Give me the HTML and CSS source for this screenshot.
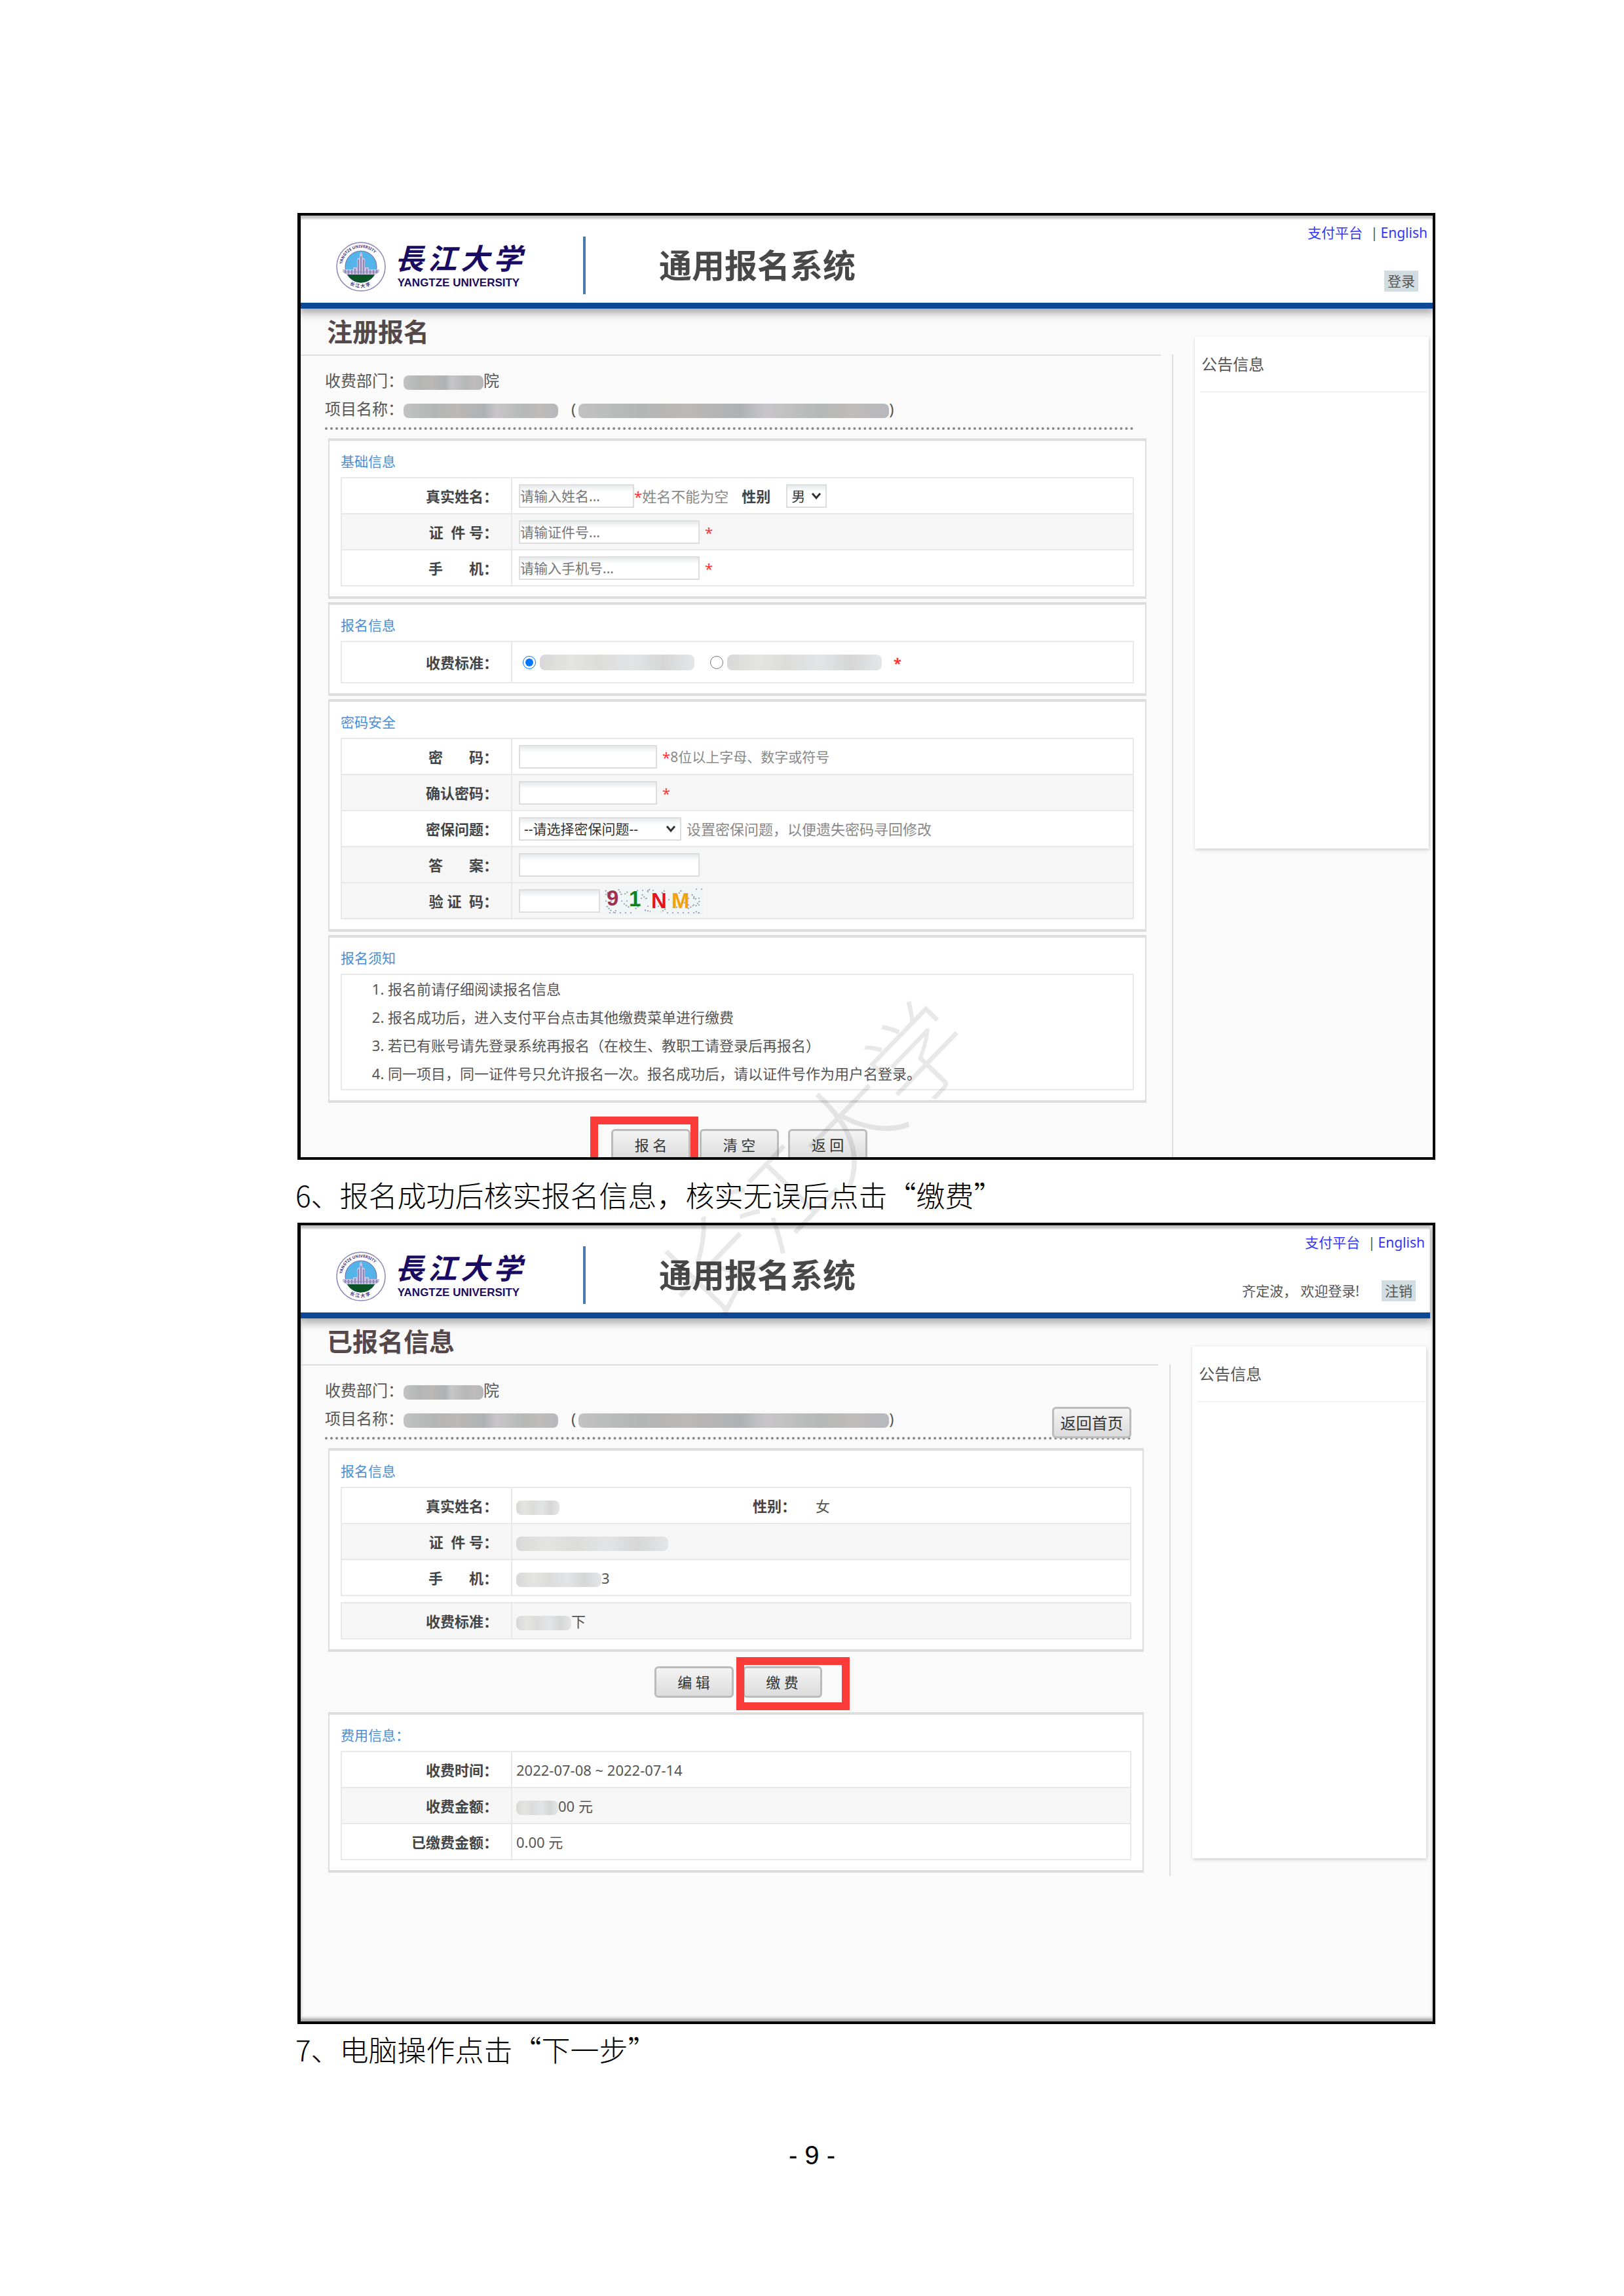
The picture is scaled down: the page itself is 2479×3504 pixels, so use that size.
FILE: index.html
```html
<!DOCTYPE html>
<html lang="zh-CN">
<head>
    <meta charset="UTF-8">
    <meta name="viewport" content="width=device-width, initial-scale=1.0">
    <title>通用报名系统 操作说明</title>
    <link rel="stylesheet" href="styles.css">
</head>
<body>
    <main class="page">
        <!-- 注册报名 -->
        <section class="screen">
            <header class="header">
                <!-- 校徽 -->
                <svg class="emblem" viewBox="0 0 76 76" aria-hidden="true">
                    <g id="emblem">
                        <circle cx="38" cy="38" r="37" fill="#fff" stroke="#8d84b8" stroke-width="1.5"/>
                        <path id="ring-top" d="M9 38a29 29 0 0 1 58 0" fill="none"/>
                        <path id="ring-bottom" d="M6 38a32 32 0 0 0 64 0" fill="none"/>
                        <text class="ring-text"><textPath href="#ring-top" startOffset="4">YANGTZE UNIVERSITY</textPath></text>
                        <text class="ring-text ring-text-cn"><textPath href="#ring-bottom" startOffset="32">长 江 大 学</textPath></text>
                        <circle cx="38" cy="38" r="24" fill="#54b4ea" stroke="#6b66a5"/>
                        <path d="M17 50h42a24 24 0 0 1-42 0z" fill="#0a5528"/>
                        <path d="M10 42h16v-3h6V26l4-2v-5l2-4 2 4v5l4 2v13h6v3h16v4l-6 4H16l-6-4z" fill="#c9c3e0"/>
                        <path d="M34 27v22M38 22v27M42 27v22M29 41v8M47 41v8M14 43v5M19 43v6M24 43v6M52 43v6M57 43v6M62 43v5" stroke="#7a74ad" stroke-width="1.5"/>
                        <path d="M12 46h52" stroke="#8d84b8"/>
                    </g>
                </svg>
                <div class="brand">
                    <div class="brand-cn"><span>長</span><span>江</span><span>大</span><span>学</span></div>
                    <div class="brand-en">YANGTZE UNIVERSITY</div>
                </div>
                <h1 class="title">通用报名系统</h1>
                <div class="header-side">
                    <nav class="links"><a href="#">支付平台</a><span class="bar">|</span><a href="#">English</a></nav>
                    <div class="user"><button type="button" class="login">登录</button></div>
                </div>
            </header>
            <div class="body">
                <form class="content">
                    <h2>注册报名</h2>
                    <div class="meta">
                        <p>收费部门：<span class="smear smear-dept"></span>院</p>
                        <p>项目名称：<span class="smear smear-name"></span><span class="paren">(</span><span class="smear smear-long"></span>)</p>
                    </div>
                    <section class="box">
                        <h3>基础信息</h3>
                        <table>
                            <tr>
                                <th><label for="name">真实姓名：</label></th>
                                <td><div class="field">
                                    <input id="name" class="w-name" type="text" placeholder="请输入姓名..."><span class="req">*</span><span class="tip">姓名不能为空</span>
                                    <label class="sex-label" for="sex">性别</label>
                                    <span class="select w-sex"><select id="sex"><option>男</option><option>女</option></select><svg viewBox="0 0 16 12"><path d="M2 2l6 7 6-7"/></svg></span>
                                </div></td>
                            </tr>
                            <tr class="even">
                                <th><label for="idno">证&nbsp; 件 号：</label></th>
                                <td><div class="field"><input id="idno" class="w-long" type="text" placeholder="请输证件号..."><span class="req gap">*</span></div></td>
                            </tr>
                            <tr>
                                <th><label for="phone">手<span class="pad"></span>机：</label></th>
                                <td><div class="field"><input id="phone" class="w-long" type="text" placeholder="请输入手机号..."><span class="req gap">*</span></div></td>
                            </tr>
                        </table>
                    </section>
                    <section class="box">
                        <h3>报名信息</h3>
                        <table>
                            <tr class="tall">
                                <th>收费标准：</th>
                                <td><div class="field fees">
                                    <span class="fee"><input id="fee1" type="radio" name="fee" checked><label for="fee1" class="smear light smear-fee" aria-label="收费标准一"></label></span>
                                    <span class="fee"><input id="fee2" type="radio" name="fee"><label for="fee2" class="smear light smear-fee" aria-label="收费标准二"></label></span>
                                    <span class="req fee-req">*</span>
                                </div></td>
                            </tr>
                        </table>
                    </section>
                    <section class="box">
                        <h3>密码安全</h3>
                        <table>
                            <tr>
                                <th><label for="pwd">密<span class="pad"></span>码：</label></th>
                                <td><div class="field"><input id="pwd" class="w-pwd" type="password"><span class="req gap">*</span><span class="tip small">8位以上字母、数字或符号</span></div></td>
                            </tr>
                            <tr class="even">
                                <th><label for="pwd2">确认密码：</label></th>
                                <td><div class="field"><input id="pwd2" class="w-pwd" type="password"><span class="req gap">*</span></div></td>
                            </tr>
                            <tr>
                                <th><label for="question">密保问题：</label></th>
                                <td><div class="field">
                                    <span class="select w-question"><select id="question"><option>--请选择密保问题--</option></select><svg viewBox="0 0 16 12"><path d="M2 2l6 7 6-7"/></svg></span>
                                    <span class="tip gap">设置密保问题，以便遗失密码寻回修改</span>
                                </div></td>
                            </tr>
                            <tr class="even">
                                <th><label for="answer">答<span class="pad"></span>案：</label></th>
                                <td><div class="field"><input id="answer" class="w-long" type="text"></div></td>
                            </tr>
                            <tr class="even">
                                <th><label for="code">验 证&nbsp; 码：</label></th>
                                <td><div class="field">
                                    <input id="code" class="w-code" type="text">
                                    <svg class="captcha" viewBox="0 0 152 44" role="img" aria-label="验证码">
                                        <rect width="152" height="44" fill="#f2f5f5"/>
                                        <path d="M4 30l8 8M22 4l5 9M30 26l9 6M36 8l-5 4M48 34l7-6M58 12l6 7M62 36l9 2M88 10l6-5M94 34l-7 5M106 24l6 9M118 6l-5 6M128 34l8-5M134 12l7 8M146 22l-7 9M122 24l5 5M2 6l6 6M14 40l6-5M70 4l-5 6M140 38l7 4" stroke="#8fa0a4" stroke-width="2" stroke-dasharray="2 2" fill="none"/>
                                        <path d="M2 12h22M8 40h40M50 6h30M66 30h22M96 40h50M120 18h28M140 4h10M2 22h40M56 18h14M90 20h14M128 28h20" stroke="#a6a8c8" stroke-width="2" stroke-dasharray="2 6" fill="none"/>
                                        <text x="4" y="29" fill="#9b3350">9</text>
                                        <text x="38" y="30" fill="#128021">1</text>
                                        <text x="72" y="33" fill="#e5141c">N</text>
                                        <text x="103" y="33" fill="#f2a20c">M</text>
                                    </svg>
                                </div></td>
                            </tr>
                        </table>
                    </section>
                    <section class="box">
                        <h3>报名须知</h3>
                        <ol class="notice">
                            <li>报名前请仔细阅读报名信息</li>
                            <li>报名成功后，进入支付平台点击其他缴费菜单进行缴费</li>
                            <li>若已有账号请先登录系统再报名（在校生、教职工请登录后再报名）</li>
                            <li>同一项目，同一证件号只允许报名一次。报名成功后，请以证件号作为用户名登录。</li>
                        </ol>
                    </section>
                    <div class="actions actions-cut">
                        <span class="mark mark-signup"><button type="button" class="btn">报 名</button></span>
                        <button type="reset" class="btn">清 空</button>
                        <button type="button" class="btn">返 回</button>
                    </div>
                </form>
                <div class="divider"></div>
                <aside class="news"><h4>公告信息</h4></aside>
            </div>
        </section>

        <p class="step">6、报名成功后核实报名信息，核实无误后点击“缴费”</p>

        <!-- 已报名信息 -->
        <section class="screen screen-done">
            <header class="header">
                <svg class="emblem" viewBox="0 0 76 76" aria-hidden="true"><use href="#emblem"/></svg>
                <div class="brand">
                    <div class="brand-cn"><span>長</span><span>江</span><span>大</span><span>学</span></div>
                    <div class="brand-en">YANGTZE UNIVERSITY</div>
                </div>
                <h1 class="title">通用报名系统</h1>
                <div class="header-side">
                    <nav class="links"><a href="#">支付平台</a><span class="bar">|</span><a href="#">English</a></nav>
                    <div class="user"><span>齐定波， 欢迎登录!</span><button type="button" class="login">注销</button></div>
                </div>
            </header>
            <div class="body">
                <div class="content">
                    <h2>已报名信息</h2>
                    <div class="meta">
                        <p>收费部门：<span class="smear smear-dept"></span>院</p>
                        <p>项目名称：<span class="smear smear-name"></span><span class="paren">(</span><span class="smear smear-long"></span>)</p>
                        <button type="button" class="btn btn-home">返回首页</button>
                    </div>
                    <section class="box">
                        <h3>报名信息</h3>
                        <table>
                            <tr>
                                <th>真实姓名：</th>
                                <td class="half"><span class="smear light smear-user"></span></td>
                                <td class="sex"><b>性别：</b>女</td>
                            </tr>
                            <tr class="even">
                                <th>证&nbsp; 件 号：</th>
                                <td colspan="2"><span class="smear light smear-id"></span></td>
                            </tr>
                            <tr>
                                <th>手<span class="pad"></span>机：</th>
                                <td colspan="2"><span class="smear light smear-phone"></span>3</td>
                            </tr>
                        </table>
                        <table class="second">
                            <tr class="even">
                                <th>收费标准：</th>
                                <td><span class="smear light smear-std"></span>下</td>
                            </tr>
                        </table>
                    </section>
                    <div class="actions">
                        <button type="button" class="btn">编 辑</button>
                        <span class="mark mark-pay"><button type="button" class="btn">缴 费</button></span>
                    </div>
                    <section class="box">
                        <h3>费用信息：</h3>
                        <table>
                            <tr>
                                <th>收费时间：</th>
                                <td>2022-07-08 ~ 2022-07-14</td>
                            </tr>
                            <tr class="even">
                                <th>收费金额：</th>
                                <td><span class="smear light smear-sum"></span>00 元</td>
                            </tr>
                            <tr>
                                <th>已缴费金额：</th>
                                <td>0.00 元</td>
                            </tr>
                        </table>
                    </section>
                </div>
                <div class="divider"></div>
                <aside class="news"><h4>公告信息</h4></aside>
            </div>
        </section>

        <p class="step step-last">7、电脑操作点击“下一步”</p>
        <div class="watermark" aria-hidden="true">长江大学</div>
    </main>
    <footer class="page-no">- 9 -</footer>
</body>
</html>
```
FILE: styles.css
```css
* {
    margin: 0;
    padding: 0;
    box-sizing: border-box;
}

body {
    background-color: #ffffff;
    color: #555555;
    font-family: "Noto Sans", "Noto Sans CJK SC", sans-serif;
    font-size: 22px;
    line-height: 32px;
}

button, input, select {
    font: inherit;
    color: inherit;
}

.ring-text {
    font-size: 6px;
    font-weight: bold;
    fill: #3d3180;
}

.ring-text-cn {
    font-size: 7px;
}

.page {
    position: relative;
    padding: 325px 288px 0 454px;
}

/* 截图外框 */
.screen {
    border: 4px solid #000000;
    border-left-width: 5px;
    background-color: #fafafa;
    overflow: hidden;
}

.screen-done {
    padding: 0 4px 222px 0;
    box-shadow: inset 0 -5px 4px #aaaaaa;
}

.header {
    display: flex;
    align-items: center;
    height: 142px;
    padding-left: 54px;
    background-color: #ffffff;
    border-bottom: 9px solid #0d4896;
    box-shadow: inset 0 5px 3px #c4c4c4, 0 4px 12px 3px #aaaaaa;
}

.emblem {
    width: 76px;
    height: 76px;
    margin-top: 22px;
}

.brand {
    width: 194px;
    margin: 12px 93px 0 14px;
    color: #1a0b62;
}

.brand-cn {
    display: flex;
    justify-content: space-between;
    font-size: 44px;
    font-weight: bold;
    font-style: italic;
    line-height: 60px;
}

.brand-en {
    font-family: "Liberation Sans", sans-serif;
    font-size: 17px;
    font-weight: bold;
    line-height: 16px;
    text-align: center;
}

.title {
    margin-top: 18px;
    padding: 9px 0 9px 112px;
    border-left: 4px solid #4a7aac;
    color: #484848;
    font-size: 50px;
    line-height: 70px;
}

.header-side {
    display: flex;
    flex-direction: column;
    align-items: flex-end;
    gap: 42px;
    margin: -8px 0 0 auto;
    padding-right: 8px;
    font-size: 21px;
}

.links a {
    color: #3333ff;
    text-decoration: none;
}

.links .bar {
    margin: 0 4px 0 12px;
}

.user {
    display: flex;
    gap: 34px;
    padding-right: 14px;
}

.login {
    padding: 0 5px;
    border: 0;
    background-color: #d2dde2;
}

.body {
    display: flex;
}

.content {
    flex: 1;
    min-width: 0;
}

h2 {
    padding: 12px 40px;
    border-bottom: 2px solid #dddddd;
    color: #54484a;
    font-size: 39px;
    line-height: 46px;
}

.meta {
    position: relative;
    margin: 0 41px 13px 37px;
    padding: 16px 0 7px;
    border-bottom: 4px dotted #888888;
    font-size: 24px;
    line-height: 43px;
}

.btn-home {
    position: absolute;
    right: 0;
    bottom: -2px;
}

.paren {
    margin: 0 4px 0 20px;
}

/* 打码块 */
.smear {
    display: inline-block;
    height: 22px;
    border-radius: 8px;
    vertical-align: middle;
    background: linear-gradient(90deg, #c2c2c2, #b4b6b6 20%, #bcb8b6 35%, #aeb1b4 52%, #c8c6c8 60%, #b6b8b8 78%, #c0bcba 88%, #b6b8bc);
}

.smear.light {
    background: linear-gradient(90deg, #d8d8d8, #e4e4e2 20%, #dcdcda 38%, #e2e4e6 60%, #d6d6d6 80%, #e4e6e8);
}

.smear-dept { width: 122px; }
.smear-name { width: 236px; }
.smear-long { width: 474px; }
.smear-fee { width: 236px; height: 24px; }
.smear-user { width: 66px; }
.smear-id { width: 232px; }
.smear-phone { width: 130px; }
.smear-std { width: 84px; }
.smear-sum { width: 64px; }

.box {
    margin: 0 22px 5px 42px;
    padding: 15px 17px;
    border: solid #dddddd;
    border-width: 4px 2px;
    background-color: #ffffff;
}

h3 {
    margin-bottom: 8px;
    color: #4a8ed8;
    font-size: 21px;
    font-weight: normal;
    line-height: 32px;
}

table {
    width: 100%;
    border-collapse: collapse;
}

th, td {
    height: 55px;
    border: 2px solid #e8e8e8;
    text-align: left;
    white-space: nowrap;
}

th {
    width: 260px;
    padding-right: 20px;
    color: #444444;
    text-align: right;
}

td {
    padding-left: 6px;
}

.even {
    background-color: #f6f6f6;
}

.tall th {
    height: 63px;
}

.second {
    margin-top: 9px;
}

.half {
    width: 362px;
    border-right: 0;
}

.sex {
    border-left: 0;
}

.sex b {
    margin-right: 30px;
    color: #444444;
}

.pad {
    display: inline-block;
    width: 40px;
}

.field {
    display: flex;
    align-items: center;
    padding-left: 4px;
}

.field input:not([type="radio"]),
.field select {
    height: 36px;
    border: 2px solid #dddddd;
    background: linear-gradient(#e6eaec, #ffffff 10px);
    font-size: 21px;
    line-height: 30px;
}

.field input::placeholder {
    color: #777777;
}

.w-name { width: 176px; }
.w-long { width: 276px; }
.w-pwd { width: 211px; }
.w-code { width: 124px; }
.w-sex { width: 62px; }
.w-question { width: 248px; }

.select {
    position: relative;
}

.select select {
    display: block;
    width: 100%;
    padding-left: 6px;
    appearance: none;
    color: #333333;
}

.select svg {
    position: absolute;
    top: 12px;
    right: 8px;
    width: 16px;
    height: 12px;
    fill: none;
    stroke: #333333;
    stroke-width: 3;
    pointer-events: none;
}

.req {
    color: #ff3333;
}

.gap {
    margin-left: 8px;
}

.tip {
    color: #888888;
}

.tip.small {
    font-size: 21px;
}

.sex-label {
    margin: 0 24px 0 20px;
    color: #444444;
    font-weight: bold;
}

.fees {
    gap: 18px;
}

.fee {
    display: flex;
    align-items: center;
}

.field input[type="radio"] {
    width: 20px;
    height: 20px;
    margin: 0 6px;
    accent-color: #0075ff;
}

.fee-req {
    font-weight: bold;
}

.captcha {
    width: 152px;
    height: 44px;
    margin-left: 6px;
    font-family: "Liberation Sans", sans-serif;
    font-size: 33px;
    font-weight: bold;
}

.notice {
    padding: 0 0 2px 70px;
    border: 2px solid #e8e8e8;
    line-height: 43px;
}

.actions {
    display: flex;
    justify-content: center;
    gap: 14px;
    margin-top: -5px;
    padding: 22px 17px 22px 43px;
}

.actions-cut {
    margin-bottom: -5px;
    padding: 40px 17px 0 43px;
}

.btn {
    min-width: 121px;
    height: 48px;
    border: 3px solid #bbbbbb;
    border-radius: 6px;
    background: linear-gradient(#f4f4f4, #dcdcdc);
    color: #333333;
}

/* 红框标注 */
.mark {
    position: relative;
}

.mark::after {
    content: "";
    position: absolute;
    border: 12px solid #fb3a3a;
}

.mark-signup::after {
    inset: -19px -12px -10px -32px;
}

.mark-pay::after {
    inset: -14px -42px -19px -10px;
}

.divider {
    width: 2px;
    margin: 70px 33px 0 17px;
    background-color: #dddddd;
}

.news {
    align-self: flex-start;
    width: 357px;
    height: 781px;
    margin: 43px 6px 0 0;
    padding: 20px 2px 0 8px;
    background-color: #ffffff;
    box-shadow: 1px 2px 5px #cccccc;
}

.news h4 {
    padding: 0 2px 20px;
    border-bottom: 2px solid #f2f2f2;
    font-size: 24px;
    font-weight: normal;
    line-height: 43px;
}

.step {
    padding-top: 10px;
    margin-left: -3px;
    color: #000000;
    font-family: "Noto Sans CJK SC", sans-serif;
    font-size: 44px;
    font-weight: 300;
    line-height: 86px;
}

.step-last {
    padding-top: 0;
    line-height: 76px;
}

.watermark {
    position: absolute;
    top: 1691px;
    left: 938px;
    color: rgba(0, 0, 0, 0.09);
    font-family: "Noto Sans CJK SC", serif;
    font-size: 150px;
    font-weight: 300;
    line-height: 150px;
    transform: rotate(-46deg);
    pointer-events: none;
}

.page-no {
    padding: 100px 0 170px;
    color: #000000;
    font-family: "Liberation Sans", sans-serif;
    font-size: 40px;
    line-height: 48px;
    text-align: center;
}
```
